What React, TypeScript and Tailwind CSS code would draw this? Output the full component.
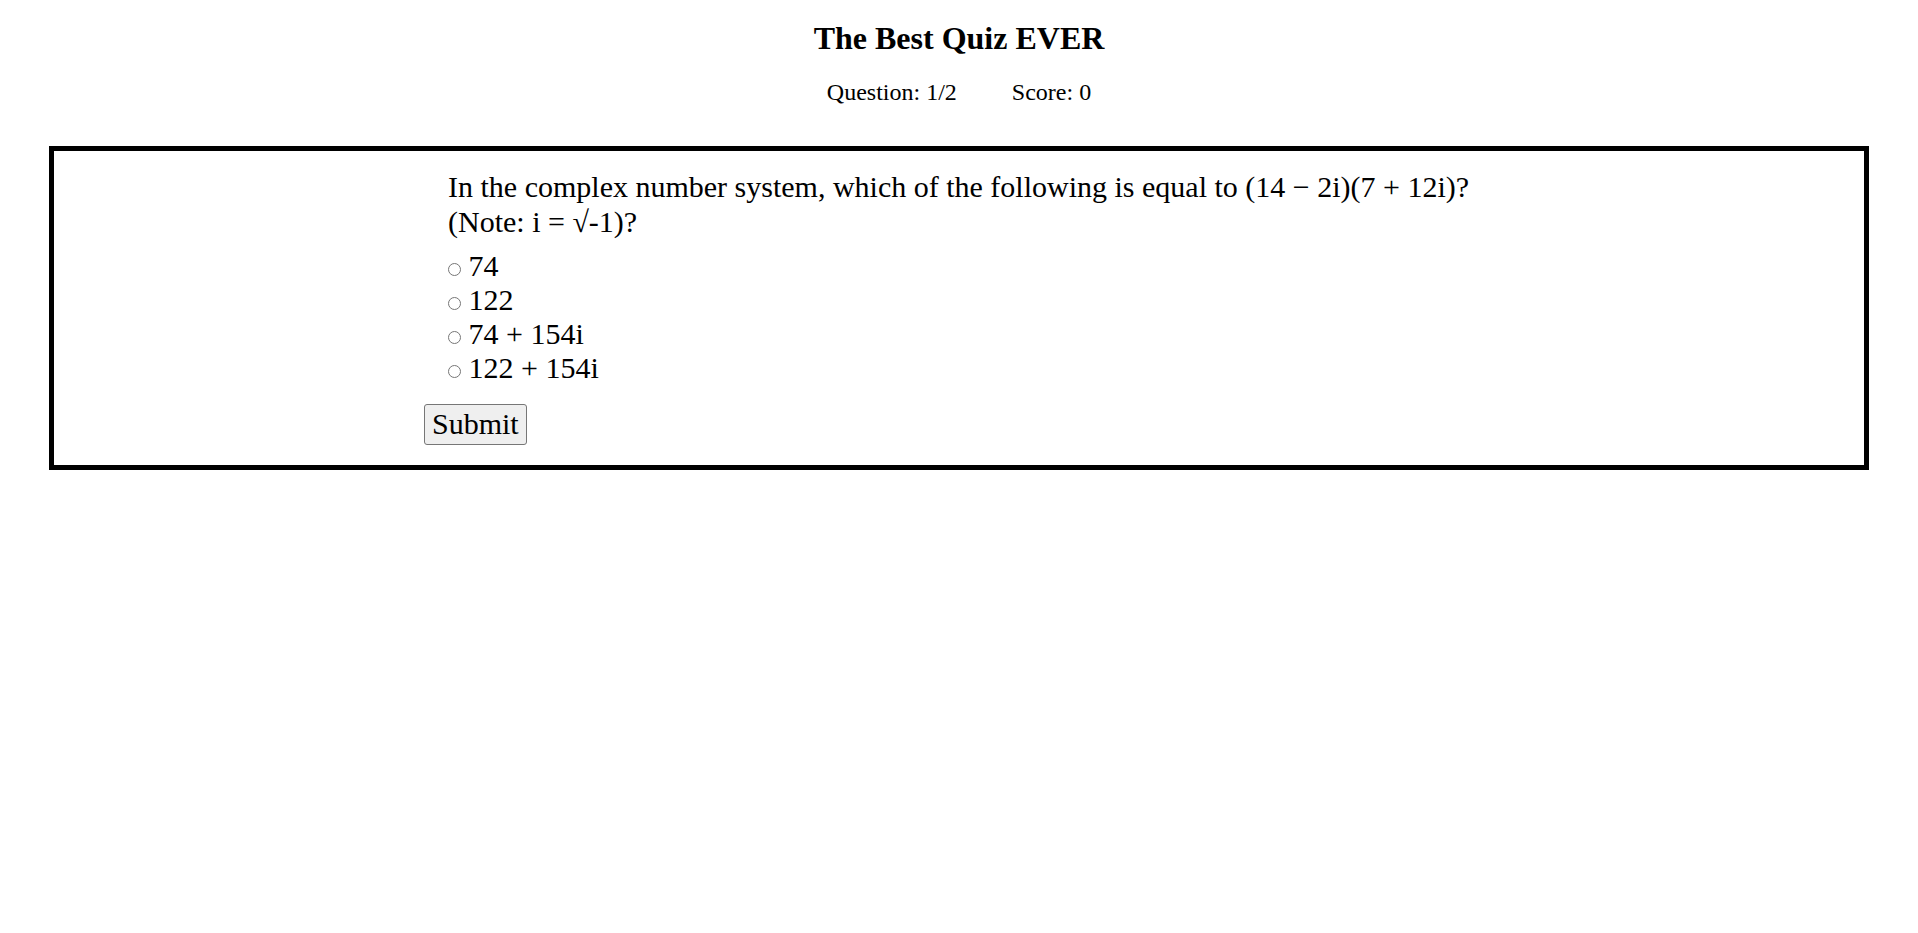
import { useState } from 'react';

const options = ['74', '122', '74 + 154i', '122 + 154i'];

export default function App() {
  const [answer, setAnswer] = useState<string | null>(null);

  return (
    <div className="min-h-screen bg-white font-['Liberation_Serif',serif] text-black">
      <h1 className="pt-[20px] text-center text-[32px] font-bold leading-[1.15]">The Best Quiz EVER</h1>

      <div className="mt-[22px] flex justify-center gap-[55px] text-[24px] leading-[1.15]">
        <span>Question: 1/2</span>
        <span>Score: 0</span>
      </div>

      <div className="mx-[49px] mt-[40px] border-[5px] border-black pb-[20px] pl-[370px] pt-[19px]">
        <form
          onSubmit={(e) => e.preventDefault()}
          className="text-[30px] leading-[1.15]"
        >
          <div className="pl-[24px]">
            <p>
              In the complex number system, which of the following is equal to (14 − 2i)(7 + 12i)?
              <br />
              (Note: i = √-1)?
            </p>

            <div className="mt-[10px]">
              {options.map((opt) => (
                <label key={opt} className="block leading-[34px]">
                  <input
                    type="radio"
                    name="answer"
                    value={opt}
                    checked={answer === opt}
                    onChange={() => setAnswer(opt)}
                    className="h-[13px] w-[13px]"
                  />{' '}
                  {opt}
                </label>
              ))}
            </div>
          </div>

          <button
            type="submit"
            className="mt-[19px] rounded-[3px] border border-[#767676] bg-[#efefef] px-[7px] py-[2px] leading-[1.15]"
          >
            Submit
          </button>
        </form>
      </div>
    </div>
  );
}
